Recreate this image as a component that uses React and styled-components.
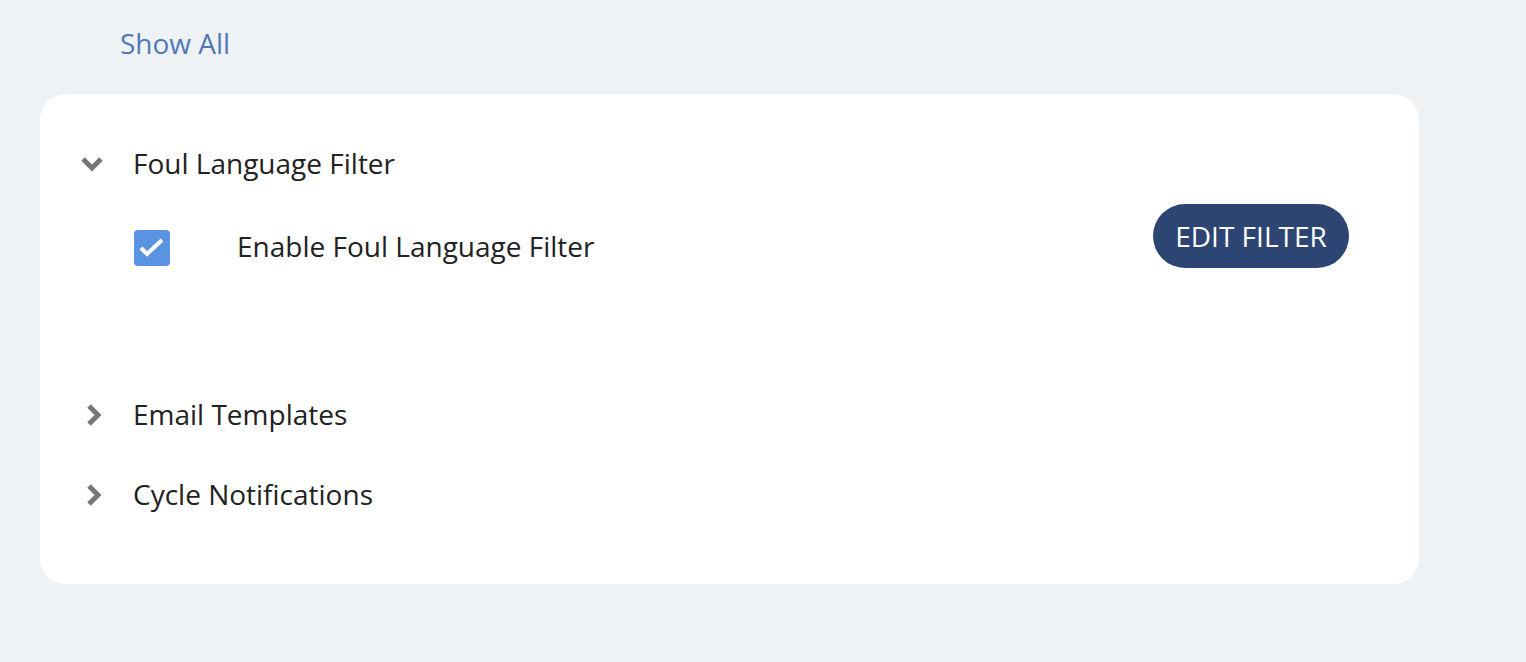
import styled, { createGlobalStyle } from "styled-components";

const GlobalStyle = createGlobalStyle`
  body {
    margin: 0;
    background: #eff2f5;
    font-family: "Open Sans", "Liberation Sans", sans-serif;
    color: #222;
  }
`;

const Page = styled.div`
  padding: 25px 0 40px 40px;
  width: 1379px;
`;

const ShowAllLink = styled.a`
  display: inline-block;
  margin-left: 80px;
  font-size: 28px;
  line-height: 36px;
  color: #4f78b9;
  cursor: pointer;
`;

const Card = styled.div`
  margin-top: 33px;
  background: #fff;
  border-radius: 26px;
  padding: 49px 70px 70px 40px;
  display: flex;
  flex-direction: column;
  gap: 40px;
`;

const Section = styled.div`
  display: flex;
  flex-direction: column;
`;

const SectionHeader = styled.div`
  display: flex;
  align-items: center;
  height: 40px;
  cursor: pointer;
`;

const ChevronBox = styled.span`
  width: 53px;
  display: flex;
  align-items: center;
  padding-left: ${(p) => (p.$open ? "0" : "6px")};
  margin-top: 1px;
  box-sizing: border-box;
`;

const SectionTitle = styled.span`
  font-size: 28px;
  line-height: 40px;
`;

const SectionBody = styled.div`
  margin: 21px 0 84px 54px;
  display: flex;
  align-items: flex-start;
  justify-content: space-between;
`;

const CheckRow = styled.label`
  display: flex;
  align-items: center;
  margin-top: 22px;
  height: 44px;
  gap: 67px;
`;

const CheckBox = styled.span`
  width: 36px;
  height: 36px;
  border-radius: 4px;
  background: #5b93e3;
  display: flex;
`;

const CheckLabel = styled.span`
  font-size: 28px;
  margin-top: -4px;
`;

const EditButton = styled.button`
  width: 196px;
  height: 64px;
  border: none;
  border-radius: 32px;
  background: #2d4573;
  color: #fff;
  font-family: "Open Sans", "Liberation Sans", sans-serif;
  font-size: 28px;
  cursor: pointer;
  padding: 0;
`;

function Chevron({ open }) {
  return open ? (
    <svg width="24" height="16" viewBox="0 0 24 16">
      <polyline
        points="3,3 12,12 21,3"
        fill="none"
        stroke="#777"
        strokeWidth="5"
      />
    </svg>
  ) : (
    <svg width="17" height="24" viewBox="0 0 17 24">
      <polyline
        points="3,3 12,12 3,21"
        fill="none"
        stroke="#777"
        strokeWidth="5"
      />
    </svg>
  );
}

const sections = [
  { title: "Foul Language Filter", open: true },
  { title: "Email Templates", open: false },
  { title: "Cycle Notifications", open: false },
];

export default function App() {
  return (
    <>
      <GlobalStyle />
      <Page>
        <ShowAllLink>Show All</ShowAllLink>
        <Card>
          {sections.map((s) => (
            <Section key={s.title}>
              <SectionHeader>
                <ChevronBox $open={s.open}>
                  <Chevron open={s.open} />
                </ChevronBox>
                <SectionTitle>{s.title}</SectionTitle>
              </SectionHeader>
              {s.open && (
                <SectionBody>
                  <CheckRow>
                    <CheckBox>
                      <svg width="36" height="36" viewBox="0 0 36 36">
                        <polyline
                          points="7,18 13,24 28,10"
                          fill="none"
                          stroke="#fff"
                          strokeWidth="4"
                        />
                      </svg>
                    </CheckBox>
                    <CheckLabel>Enable Foul Language Filter</CheckLabel>
                  </CheckRow>
                  <EditButton>EDIT FILTER</EditButton>
                </SectionBody>
              )}
            </Section>
          ))}
        </Card>
      </Page>
    </>
  );
}
